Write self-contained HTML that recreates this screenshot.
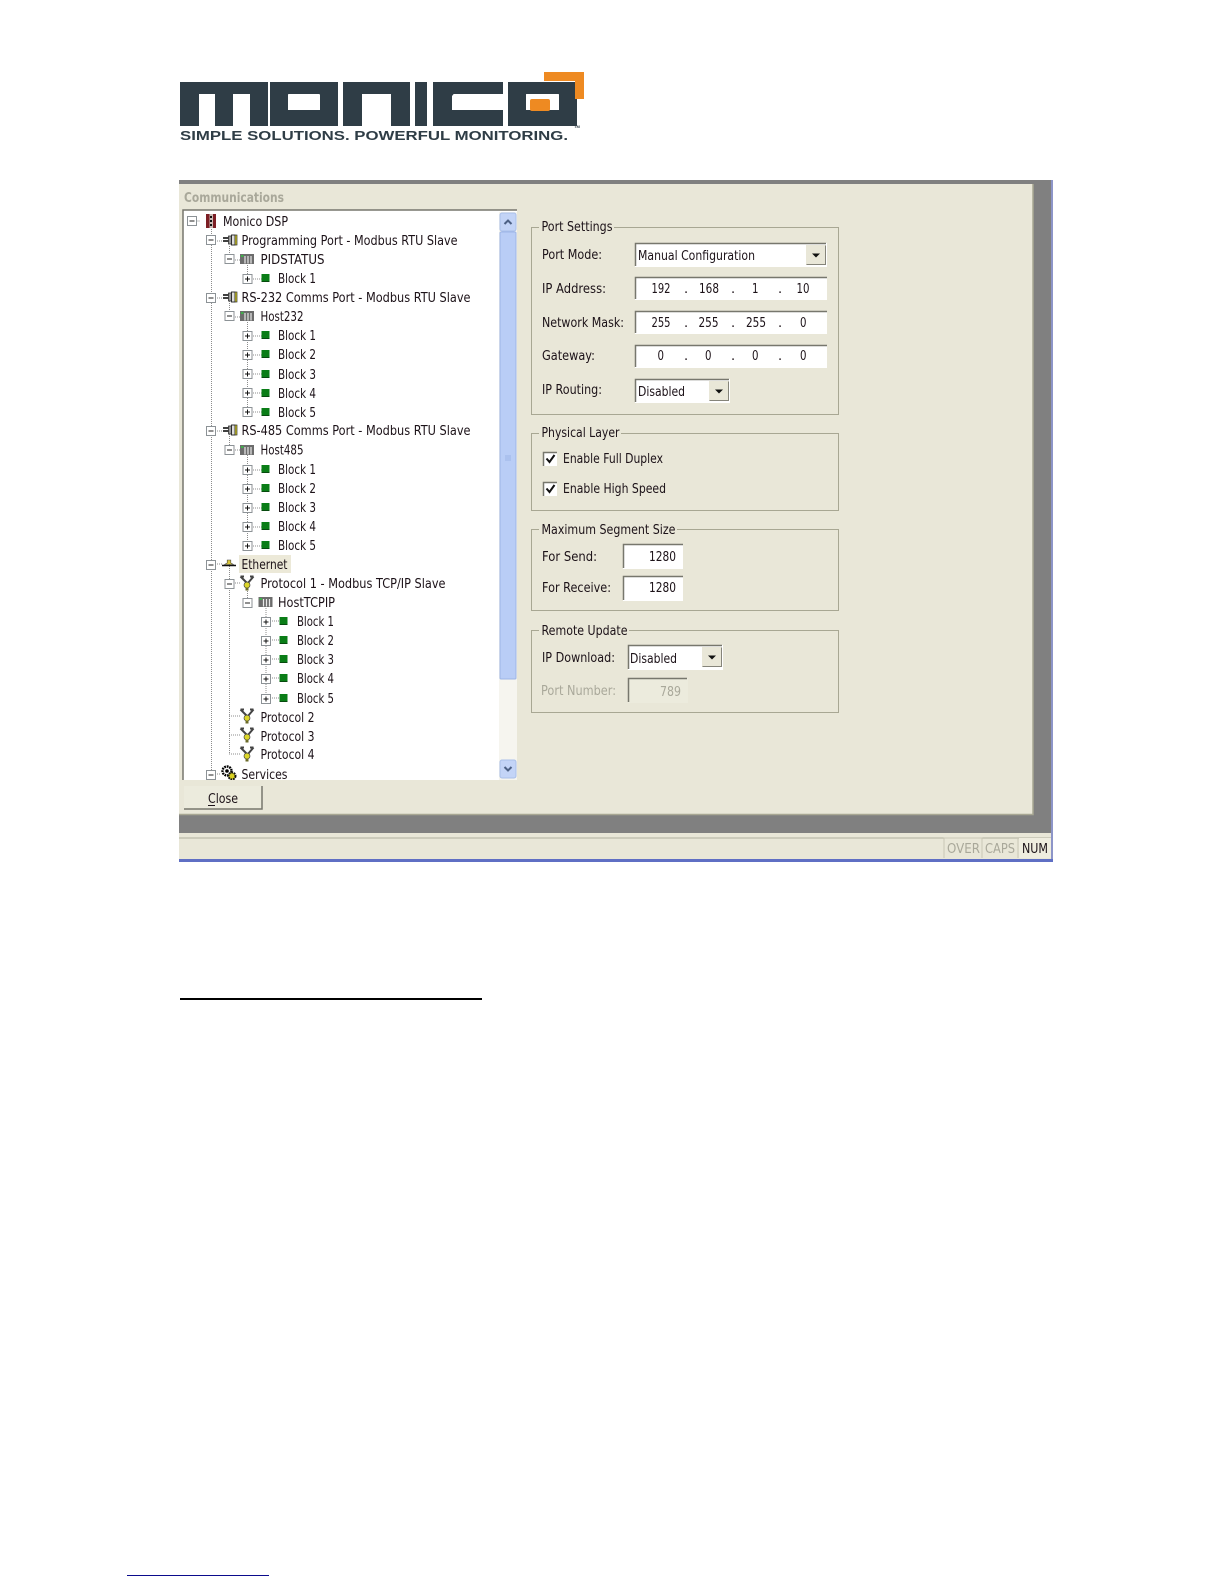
<!DOCTYPE html>
<html><head><meta charset="utf-8"><style>
html,body{margin:0;padding:0;background:#fff}
svg{display:block}
text{font-family:"DejaVu Sans","Liberation Sans",sans-serif;font-size:13px;fill:#1c1218}
.g{fill:#a9a89a}
.box{fill:none;stroke:#a8a793;stroke-width:1}
.bg{fill:#e9e7d8}
.dot{stroke:#8c8c8c;stroke-width:1;stroke-dasharray:1 1;fill:none}
.win{filter:blur(.3px)}
.lg{font-size:80px;font-weight:400;fill:#2f3d46}
</style></head><body>
<svg xmlns="http://www.w3.org/2000/svg" width="1224" height="1584" viewBox="0 0 1224 1584">
<defs>
<clipPath id="wm"><rect x="170" y="82" width="420" height="44"/></clipPath>
<clipPath id="tc"><rect x="184" y="211" width="315" height="569"/></clipPath>
<g id="minus"><rect x="-4.5" y="-4.5" width="9" height="9" fill="#fff" stroke="#8c9296"/><path d="M-2.5 0H2.5" stroke="#222"/></g>
<g id="plus"><rect x="-4.5" y="-4.5" width="9" height="9" fill="#fff" stroke="#8c9296"/><path d="M-2.5 0H2.5M0-2.5V2.5" stroke="#111"/></g>
<g id="dsp"><rect x="-5" y="-7" width="10" height="14" fill="#7d1f25"/><rect x="-1.5" y="-7" width="3.5" height="14" fill="#c9b9b4"/><path d="M0-5V-3M0-1V1M0 3V5" stroke="#111" stroke-width="2"/></g>
<g id="port"><path d="M-7-2H-1M-7 1H-1" stroke="#000" stroke-width="1.6"/><rect x="-1.500" y="-4" width="3" height="8" fill="#999" stroke="#333" stroke-width=".8"/><rect x="1.500" y="-5" width="3.500" height="10" fill="#ddd" stroke="#222" stroke-width=".9"/><rect x="5" y="-5" width="2" height="10" fill="#cfc720" stroke="#333" stroke-width=".7"/></g>
<g id="rack"><rect x="-7" y="-5" width="14" height="10" fill="#6c6c6c"/><path d="M-2-3V4.500M1-3V4.500M4-3V4.500" stroke="#e8e8e8" stroke-width="1.200"/><rect x="-6" y="-4" width="2.500" height="2" fill="#3fae4a"/></g>
<g id="blk"><rect x="-4" y="-4" width="8" height="8" fill="#0a7d17"/><path d="M-4 3.500H4" stroke="#064a0e"/></g>
<g id="eth"><path d="M-7 1.500H7" stroke="#111" stroke-width="1.500"/><path d="M-4.500 .5H4.500L1.800-1V-4H-1.800V-1Z" fill="#d9c63a" stroke="#444" stroke-width=".6"/></g>
<g id="pro"><path d="M-6.500-6.500L0 0M6.500-6.500L1 0M-6.500-6.500H-3M6.500-6.500H3" stroke="#444" stroke-width="2" fill="none"/><circle cx="0" cy="2" r="3" fill="#dcd62a" stroke="#444" stroke-width=".7"/><rect x="-1.500" y="4.500" width="3" height="3" fill="#6b6b2a"/></g>
<g id="svc"><circle cx="-2" cy="-2" r="4.500" fill="#fff" stroke="#000" stroke-width="2.400" stroke-dasharray="1.800 .8"/><circle cx="-2" cy="-2" r="1.800" fill="#000"/><circle cx="3" cy="3" r="3.500" fill="#d8d020" stroke="#111" stroke-width="2" stroke-dasharray="1.800 .8"/></g>
<g id="arrow"><path d="M-4-1.500H4L0 2.500Z" fill="#111"/></g>
<g id="btn"><rect x="0" y="0" width="20" height="20" fill="#e9e7d8"/><path d="M.5 19.500H19.500V.5" fill="none" stroke="#85847a"/></g>
</defs>

<!-- logo -->
<g clip-path="url(#wm)">
<text class="lg" x="176" y="126" textLength="94" lengthAdjust="spacingAndGlyphs">m</text>
<text class="lg" x="268" y="126" textLength="72" lengthAdjust="spacingAndGlyphs">o</text>
<text class="lg" x="338" y="126" textLength="76" lengthAdjust="spacingAndGlyphs">n</text>
<text class="lg" x="410" y="126" textLength="22" lengthAdjust="spacingAndGlyphs">i</text>
<text class="lg" x="429" y="126" textLength="76" lengthAdjust="spacingAndGlyphs">c</text>
<text class="lg" x="505" y="126" textLength="75" lengthAdjust="spacingAndGlyphs">o</text>
<path fill="#2f3d46" d="M180 82H268V94H180ZM180 82H199V126H180ZM215 82H233V126H215ZM250 82H268V126H250ZM270 82H338V94H270ZM270 110H338V126H270ZM270 82H288V126H270ZM320 82H338V126H320ZM343 82H410V94H343ZM343 82H362V126H343ZM391 82H410V126H391ZM415 82H427V126H415ZM433 82H503V94H433ZM433 110H503V126H433ZM433 82H452V126H433ZM508 82H577V94H508ZM508 110H577V126H508ZM508 82H526V126H508ZM559 82H577V126H559Z"/>
</g>
<path d="M544 72H584V99H575V81H544Z" fill="#ee8a22"/>
<rect x="530" y="99" width="20" height="12" rx="2" fill="#ee8a22"/>
<text x="180" y="140" textLength="388" lengthAdjust="spacingAndGlyphs" style="font-family:'Liberation Sans',sans-serif;font-size:13px;font-weight:700;fill:#2f3d46">SIMPLE SOLUTIONS. POWERFUL MONITORING.</text>
<text x="574" y="128" style="font-family:'Liberation Sans',sans-serif;font-size:4px;font-weight:700;fill:#2f3d46">TM</text>

<g class="win">
<!-- window -->
<rect x="179" y="180" width="874" height="682" fill="#808080"/>
<rect x="1051" y="180" width="2" height="682" fill="#8d95c8"/>
<rect x="179" y="184" width="854" height="630" class="bg"/>
<path d="M1033 184V814.500H179" fill="none" stroke="#a8a793" stroke-width="1.500"/>
<rect x="179" y="833" width="872" height="26" class="bg"/>
<path d="M179 838H1051" stroke="#b0af9e"/>
<rect x="179" y="859" width="874" height="3" fill="#5f6fc4"/>
<text x="184" y="202" textLength="100" lengthAdjust="spacingAndGlyphs" style="font-weight:700;fill:#a9a89a">Communications</text>

<!-- status -->
<path d="M944 858V838H982V858M982 838V858M1018 838V858" fill="none" stroke="#c9c7b6"/>
<rect x="1019" y="838" width="32" height="20" fill="#efeddf"/>
<text x="947" y="853" textLength="33" lengthAdjust="spacingAndGlyphs" class="g">OVER</text>
<text x="985" y="853" textLength="30" lengthAdjust="spacingAndGlyphs" class="g">CAPS</text>
<text x="1022" y="853" textLength="26" lengthAdjust="spacingAndGlyphs">NUM</text>

<!-- tree box -->
<rect x="183" y="210" width="334" height="570" fill="#fff"/>
<path d="M183 780V210H517" fill="none" stroke="#77776d" stroke-width="1.500"/>
<rect x="499" y="212" width="18" height="568" fill="#f6f5ef"/>
<rect x="500" y="232" width="16" height="447" rx="1" fill="#b9cdf6" stroke="#9db5e6"/>
<path d="M505 456H511M505 458H511M505 460H511" stroke="#9db5e6"/>
<rect x="500" y="213" width="16" height="18" rx="2" fill="#c3d4f7" stroke="#a9bfe9"/>
<path d="M504.500 224L508 220.500L511.500 224" fill="none" stroke="#4d6185" stroke-width="2"/>
<rect x="500" y="760" width="16" height="18" rx="2" fill="#c3d4f7" stroke="#a9bfe9"/>
<path d="M504.500 767L508 770.500L511.500 767" fill="none" stroke="#4d6185" stroke-width="2"/>

<g clip-path="url(#tc)">
<rect x="239" y="555" width="52" height="18" fill="#ece9d8"/>
<!-- tree lines -->
<path class="dot" d="M192.500 221H200M211.500 227V774M229.500 246V259M229.500 316V297M229.500 430V449M229.500 564V754M247.500 259V278M247.500 316V412M247.500 449V545M247.500 583V602M266 602V697M211 241H222M211 298H222M211 431H222M211 564H222M211 774H221M229 260H240M229 317H240M229 450H240M229 583H240M229 716H240M229 735H240M229 754H240M247 279H262M247 336H262M247 355H262M247 374H262M247 393H262M247 412H262M247 470H262M247 489H262M247 508H262M247 527H262M247 546H262M266 621H280M266 640H280M266 659H280M266 678H280M266 698H280"/>

<use href="#minus" x="192" y="221"/><use href="#dsp" x="211" y="221"/><text x="223" y="226" textLength="65" lengthAdjust="spacingAndGlyphs">Monico DSP</text>
<use href="#minus" x="211" y="240"/><use href="#port" x="230" y="240"/><text x="241.500" y="245" textLength="216" lengthAdjust="spacingAndGlyphs">Programming Port - Modbus RTU Slave</text>
<use href="#minus" x="229.500" y="259"/><use href="#rack" x="247" y="259"/><text x="260.500" y="264" textLength="64" lengthAdjust="spacingAndGlyphs">PIDSTATUS</text>
<use href="#plus" x="247.500" y="279"/><use href="#blk" x="265.500" y="278"/><text x="278" y="283" textLength="38" lengthAdjust="spacingAndGlyphs">Block 1</text>
<use href="#minus" x="211" y="298"/><use href="#port" x="230" y="297"/><text x="241.500" y="302" textLength="229" lengthAdjust="spacingAndGlyphs">RS-232 Comms Port - Modbus RTU Slave</text>
<use href="#minus" x="229.500" y="316"/><use href="#rack" x="247" y="316"/><text x="260.500" y="321" textLength="43" lengthAdjust="spacingAndGlyphs">Host232</text>
<use href="#plus" x="247.500" y="336"/><use href="#blk" x="265.500" y="335"/><text x="278" y="340" textLength="38" lengthAdjust="spacingAndGlyphs">Block 1</text>
<use href="#plus" x="247.500" y="355"/><use href="#blk" x="265.500" y="354"/><text x="278" y="359" textLength="38" lengthAdjust="spacingAndGlyphs">Block 2</text>
<use href="#plus" x="247.500" y="374"/><use href="#blk" x="265.500" y="374"/><text x="278" y="379" textLength="38" lengthAdjust="spacingAndGlyphs">Block 3</text>
<use href="#plus" x="247.500" y="393"/><use href="#blk" x="265.500" y="393"/><text x="278" y="398" textLength="38" lengthAdjust="spacingAndGlyphs">Block 4</text>
<use href="#plus" x="247.500" y="412"/><use href="#blk" x="265.500" y="412"/><text x="278" y="417" textLength="38" lengthAdjust="spacingAndGlyphs">Block 5</text>
<use href="#minus" x="211" y="431"/><use href="#port" x="230" y="430"/><text x="241.500" y="435" textLength="229" lengthAdjust="spacingAndGlyphs">RS-485 Comms Port - Modbus RTU Slave</text>
<use href="#minus" x="229.500" y="450"/><use href="#rack" x="247" y="450"/><text x="260.500" y="454.500" textLength="43" lengthAdjust="spacingAndGlyphs">Host485</text>
<use href="#plus" x="247.500" y="470"/><use href="#blk" x="265.500" y="469"/><text x="278" y="474" textLength="38" lengthAdjust="spacingAndGlyphs">Block 1</text>
<use href="#plus" x="247.500" y="489"/><use href="#blk" x="265.500" y="488"/><text x="278" y="493" textLength="38" lengthAdjust="spacingAndGlyphs">Block 2</text>
<use href="#plus" x="247.500" y="508"/><use href="#blk" x="265.500" y="507"/><text x="278" y="512" textLength="38" lengthAdjust="spacingAndGlyphs">Block 3</text>
<use href="#plus" x="247.500" y="527"/><use href="#blk" x="265.500" y="526"/><text x="278" y="531" textLength="38" lengthAdjust="spacingAndGlyphs">Block 4</text>
<use href="#plus" x="247.500" y="546"/><use href="#blk" x="265.500" y="545"/><text x="278" y="550" textLength="38" lengthAdjust="spacingAndGlyphs">Block 5</text>
<use href="#minus" x="211" y="565"/><use href="#eth" x="229" y="564"/><text x="241.500" y="569" textLength="46" lengthAdjust="spacingAndGlyphs">Ethernet</text>
<use href="#minus" x="229.500" y="584"/><use href="#pro" x="247" y="583"/><text x="260.500" y="588" textLength="185" lengthAdjust="spacingAndGlyphs">Protocol 1 - Modbus TCP/IP Slave</text>
<use href="#minus" x="247.500" y="603"/><use href="#rack" x="265.500" y="602"/><text x="278" y="607" textLength="57" lengthAdjust="spacingAndGlyphs">HostTCPIP</text>
<use href="#plus" x="266" y="622"/><use href="#blk" x="283.500" y="621"/><text x="297" y="626" textLength="37" lengthAdjust="spacingAndGlyphs">Block 1</text>
<use href="#plus" x="266" y="641"/><use href="#blk" x="283.500" y="640"/><text x="297" y="645" textLength="37" lengthAdjust="spacingAndGlyphs">Block 2</text>
<use href="#plus" x="266" y="660"/><use href="#blk" x="283.500" y="659"/><text x="297" y="664" textLength="37" lengthAdjust="spacingAndGlyphs">Block 3</text>
<use href="#plus" x="266" y="679"/><use href="#blk" x="283.500" y="678"/><text x="297" y="683" textLength="37" lengthAdjust="spacingAndGlyphs">Block 4</text>
<use href="#plus" x="266" y="699"/><use href="#blk" x="283.500" y="698"/><text x="297" y="703" textLength="37" lengthAdjust="spacingAndGlyphs">Block 5</text>
<use href="#pro" x="247" y="716"/><text x="260.500" y="722" textLength="54" lengthAdjust="spacingAndGlyphs">Protocol 2</text>
<use href="#pro" x="247" y="735"/><text x="260.500" y="741" textLength="54" lengthAdjust="spacingAndGlyphs">Protocol 3</text>
<use href="#pro" x="247" y="754"/><text x="260.500" y="759" textLength="54" lengthAdjust="spacingAndGlyphs">Protocol 4</text>
<use href="#minus" x="211" y="775"/><use href="#svc" x="229" y="773"/><text x="241.500" y="779" textLength="46" lengthAdjust="spacingAndGlyphs">Services</text>
</g>

<!-- close -->
<rect x="184" y="786" width="78" height="23" fill="#ecebdd"/>
<path d="M184 809H262V786" fill="none" stroke="#77776d" stroke-width="1.500"/>
<text x="208" y="803" textLength="30" lengthAdjust="spacingAndGlyphs">Close</text>
<rect x="208" y="805" width="7" height="1" fill="#1c1218"/>

<!-- group boxes -->
<rect class="box" x="531.500" y="227.500" width="307" height="187"/>
<rect class="bg" x="539" y="220" width="75" height="14"/>
<text x="541.500" y="231" textLength="71" lengthAdjust="spacingAndGlyphs">Port Settings</text>
<rect class="box" x="531.500" y="433.500" width="307" height="77"/>
<rect class="bg" x="539" y="426" width="82" height="14"/>
<text x="541.500" y="437" textLength="78" lengthAdjust="spacingAndGlyphs">Physical Layer</text>
<rect class="box" x="531.500" y="529.500" width="307" height="81"/>
<rect class="bg" x="539" y="522" width="138" height="14"/>
<text x="541.500" y="534" textLength="134" lengthAdjust="spacingAndGlyphs">Maximum Segment Size</text>
<rect class="box" x="531.500" y="630.500" width="307" height="82"/>
<rect class="bg" x="539" y="623" width="90" height="14"/>
<text x="541.500" y="635" textLength="86" lengthAdjust="spacingAndGlyphs">Remote Update</text>

<!-- port settings -->
<text x="542" y="259" textLength="60" lengthAdjust="spacingAndGlyphs">Port Mode:</text>
<text x="542" y="293" textLength="64" lengthAdjust="spacingAndGlyphs">IP Address:</text>
<text x="542" y="327" textLength="82" lengthAdjust="spacingAndGlyphs">Network Mask:</text>
<text x="542" y="360" textLength="53" lengthAdjust="spacingAndGlyphs">Gateway:</text>
<text x="542" y="394" textLength="60" lengthAdjust="spacingAndGlyphs">IP Routing:</text>

<rect x="635" y="243" width="192" height="24" fill="#fff"/><path d="M635.500 266V243.500H826" fill="none" stroke="#77776d" stroke-width="1.500"/>
<use href="#btn" x="806" y="245"/><use href="#arrow" x="816" y="255"/>
<text x="638" y="260" textLength="117" lengthAdjust="spacingAndGlyphs">Manual Configuration</text>

<rect x="635" y="277" width="192" height="23" fill="#fff"/><path d="M635.500 299V277.500H827" fill="none" stroke="#77776d" stroke-width="1.500"/>
<rect x="635" y="311" width="192" height="23" fill="#fff"/><path d="M635.500 333V311.500H827" fill="none" stroke="#77776d" stroke-width="1.500"/>
<rect x="635" y="345" width="192" height="23" fill="#fff"/><path d="M635.500 367V345.500H827" fill="none" stroke="#77776d" stroke-width="1.500"/>

<text x="651.500" y="293" textLength="19" lengthAdjust="spacingAndGlyphs">192</text><text x="684" y="293">.</text><text x="699" y="293" textLength="20" lengthAdjust="spacingAndGlyphs">168</text><text x="731" y="293">.</text><text x="752" y="293" textLength="6.500" lengthAdjust="spacingAndGlyphs">1</text><text x="778" y="293">.</text><text x="796.500" y="293" textLength="13" lengthAdjust="spacingAndGlyphs">10</text>
<text x="651.500" y="327" textLength="19" lengthAdjust="spacingAndGlyphs">255</text><text x="684" y="327">.</text><text x="698.500" y="327" textLength="20" lengthAdjust="spacingAndGlyphs">255</text><text x="731" y="327">.</text><text x="746" y="327" textLength="20" lengthAdjust="spacingAndGlyphs">255</text><text x="778" y="327">.</text><text x="800" y="327" textLength="6.500" lengthAdjust="spacingAndGlyphs">0</text>
<text x="657.500" y="360" textLength="6.500" lengthAdjust="spacingAndGlyphs">0</text><text x="684" y="360">.</text><text x="705" y="360" textLength="6.500" lengthAdjust="spacingAndGlyphs">0</text><text x="731" y="360">.</text><text x="752" y="360" textLength="6.500" lengthAdjust="spacingAndGlyphs">0</text><text x="778" y="360">.</text><text x="800" y="360" textLength="6.500" lengthAdjust="spacingAndGlyphs">0</text>

<rect x="635" y="379" width="95" height="24" fill="#fff"/><path d="M635.500 402V379.500H729" fill="none" stroke="#77776d" stroke-width="1.500"/>
<use href="#btn" x="709" y="381"/><use href="#arrow" x="719" y="391"/>
<text x="638" y="396" textLength="47" lengthAdjust="spacingAndGlyphs">Disabled</text>

<!-- physical -->
<rect x="543" y="452" width="14" height="14" fill="#fff"/><path d="M543.500 466V452.500H557" fill="none" stroke="#77776d" stroke-width="1.500"/>
<path d="M546.500 458.500L549.500 462L554.500 455" fill="none" stroke="#111" stroke-width="2"/>
<text x="563" y="463" textLength="100" lengthAdjust="spacingAndGlyphs">Enable Full Duplex</text>
<rect x="543" y="482" width="14" height="14" fill="#fff"/><path d="M543.500 496V482.500H557" fill="none" stroke="#77776d" stroke-width="1.500"/>
<path d="M546.500 488.500L549.500 492L554.500 485" fill="none" stroke="#111" stroke-width="2"/>
<text x="563" y="493" textLength="103" lengthAdjust="spacingAndGlyphs">Enable High Speed</text>

<!-- segment -->
<text x="542" y="561" textLength="55" lengthAdjust="spacingAndGlyphs">For Send:</text>
<text x="542" y="592" textLength="69" lengthAdjust="spacingAndGlyphs">For Receive:</text>
<rect x="623" y="544" width="60" height="25" fill="#fff"/><path d="M623.500 568V544.500H683" fill="none" stroke="#77776d" stroke-width="1.500"/>
<text x="649" y="561" textLength="27" lengthAdjust="spacingAndGlyphs">1280</text>
<rect x="623" y="576" width="60" height="25" fill="#fff"/><path d="M623.500 600V576.500H683" fill="none" stroke="#77776d" stroke-width="1.500"/>
<text x="649" y="592" textLength="27" lengthAdjust="spacingAndGlyphs">1280</text>

<!-- remote -->
<text x="542" y="662" textLength="73" lengthAdjust="spacingAndGlyphs">IP Download:</text>
<rect x="628" y="645" width="95" height="25" fill="#fff"/><path d="M628.500 669V645.500H722" fill="none" stroke="#77776d" stroke-width="1.500"/>
<use href="#btn" x="702" y="647"/><use href="#arrow" x="712" y="657"/>
<text x="630" y="663" textLength="47" lengthAdjust="spacingAndGlyphs">Disabled</text>
<text x="541" y="695" textLength="75" lengthAdjust="spacingAndGlyphs" class="g">Port Number:</text>
<rect x="628" y="678" width="60" height="25" fill="#ecebdd"/><path d="M628.500 702V678.500H687" fill="none" stroke="#77776d" stroke-width="1.500"/>
<text x="660" y="696" textLength="21" lengthAdjust="spacingAndGlyphs" class="g">789</text>
</g>

<!-- page rules -->
<rect x="180" y="998" width="302" height="2" fill="#000"/>
<rect x="127" y="1575" width="142" height="1" fill="#0b0b8c"/>
</svg>
</body></html>
